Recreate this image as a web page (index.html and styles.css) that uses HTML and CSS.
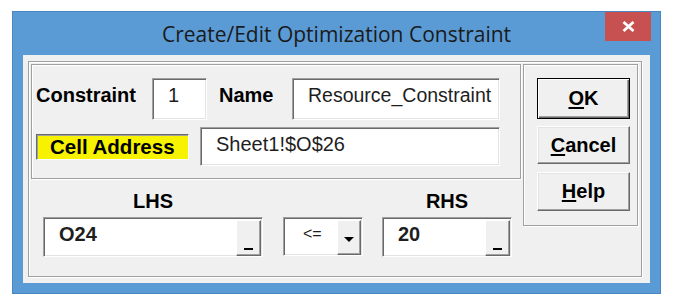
FILE: index.html
```html
<!doctype html>
<html>
    <head>
        <title>Create/Edit Optimization Constraint</title>
        <link rel="stylesheet" href="styles.css">
    </head>
    <body>
        <div class="window">
            <div class="titlebar">
                <div class="title">Create/Edit Optimization Constraint</div>
                <div class="close" title="Close">
                    <svg width="13" height="11" viewBox="0 0 13 11"><path d="M1.5 1 L11.5 10 M11.5 1 L1.5 10" stroke="#fff" stroke-width="2.8" fill="none"/></svg>
                </div>
            </div>
            <div class="client">
                <div class="frame outer">
                    <div class="main">
                        <div class="frame top">
                            <div class="row">
                                <span class="label l-constraint">Constraint</span>
                                <div class="field f-num">1</div>
                                <span class="label l-name">Name</span>
                                <div class="field f-name">Resource_Constraint</div>
                            </div>
                            <div class="row row2">
                                <div class="cell-label">Cell Address</div>
                                <div class="field f-cell">Sheet1!$O$26</div>
                            </div>
                        </div>
                        <div class="sides">
                            <div class="side lhs">
                                <div class="side-title">LHS</div>
                                <div class="field f-side"><span class="val">O24</span><span class="pick"></span></div>
                            </div>
                            <div class="side op">
                                <div class="side-title">&nbsp;</div>
                                <div class="field f-op"><span class="op-val">&lt;=</span><span class="drop"><i class="arrow"></i></span></div>
                            </div>
                            <div class="side rhs">
                                <div class="side-title">RHS</div>
                                <div class="field f-side"><span class="val">20</span><span class="pick"></span></div>
                            </div>
                        </div>
                    </div>
                    <div class="frame buttons">
                        <button type="button" class="btn btn_default"><u>O</u>K</button>
                        <button type="button" class="btn btn_cancel"><u>C</u>ancel</button>
                        <button type="button" class="btn btn_help"><u>H</u>elp</button>
                    </div>
                </div>
            </div>
        </div>
    </body>
</html>
```

FILE: styles.css
```css
* {
  box-sizing: border-box;
}

body {
  margin: 0;
  background: #fff;
  font-family: "Liberation Sans", Arial, sans-serif;
  color: #000;
}

.window {
  width: 649px;
  height: 283px;
  margin: 11px 0 0 12px;
  background-color: #5a9bd5;
  border: 1px solid #4a86c0;
  display: flex;
  flex-direction: column;
}

/* title bar */
.titlebar {
  height: 43px;
  display: grid;
  grid-template-columns: 55px 1fr 46px;
  padding-right: 9px;
  align-items: start;
}

.titlebar .title {
  grid-column: 2;
  text-align: center;
  font-family: "Open Sans", sans-serif;
  font-size: 21px;
  line-height: 45px;
  color: #1a1a1a;
  white-space: nowrap;
}

.titlebar .close {
  grid-column: 3;
  height: 29px;
  background-color: #c75050;
  display: flex;
  align-items: center;
  justify-content: center;
}

/* client area */
.client {
  flex: 1;
  margin: 0 10px 10px;
  background-color: #f0f0f0;
  padding: 6px 0 0 5px;
}

.frame {
  border: 1px solid #a0a0a0;
  box-shadow: 1px 1px 0 #fff, inset 1px 1px 0 #fff;
}

.outer {
  width: 614px;
  height: 216px;
  display: flex;
  align-items: flex-start;
  gap: 2px;
  padding: 2px 3px 0 2px;
}

.main {
  width: 490px;
}

.top {
  height: 115px;
  padding: 13px 0 0 4px;
}

.row {
  display: flex;
  align-items: flex-start;
  height: 42px;
}

.row2 {
  margin-top: 7px;
  height: 39px;
  align-items: center;
}

.label {
  font-weight: bold;
  font-size: 20px;
  line-height: 23px;
  margin-top: 6px;
}

.l-constraint {
  width: 116px;
}

.l-name {
  width: 73px;
  margin-left: 12px;
}

/* sunken edit boxes */
.field {
  background-color: #fff;
  border: 1px solid;
  border-color: #a0a0a0 #fff #fff #a0a0a0;
  box-shadow: inset 1px 1px 0 #696969, inset -1px -1px 0 #e3e3e3;
  font-size: 20px;
  line-height: 23px;
  color: #1e1e1e;
  padding-left: 15px;
  white-space: nowrap;
}

.f-num {
  width: 55px;
  height: 42px;
  padding-top: 5px;
}

.f-name {
  width: 208px;
  height: 42px;
  padding-top: 5px;
  font-size: 19.5px;
}

.f-cell {
  width: 300px;
  height: 39px;
  margin-left: 11px;
  padding-top: 5px;
}

.cell-label {
  width: 153px;
  height: 26px;
  background-color: #f7f300;
  border: 1px solid;
  border-color: #696969 #fff #fff #696969;
  box-shadow: inset 1px 1px 0 #a0a0a0;
  font-weight: bold;
  font-size: 20.5px;
  line-height: 24px;
  padding-left: 13px;
  white-space: nowrap;
}

/* LHS / operator / RHS */
.sides {
  display: flex;
  margin-top: 11px;
  padding-left: 12px;
}

.side-title {
  font-weight: bold;
  font-size: 20px;
  line-height: 23px;
  text-align: center;
  margin-bottom: 4px;
}

.lhs {
  width: 220px;
}

.op {
  width: 80px;
  margin-left: 20px;
}

.rhs {
  width: 130px;
  margin-left: 19px;
}

.f-side,
.f-op {
  height: 40px;
  display: flex;
  align-items: flex-start;
  padding-right: 1px;
}

.f-op {
  height: 39px;
  padding-left: 19px;
}

.f-side .val {
  font-weight: bold;
  padding-top: 5px;
}

.pick,
.drop {
  margin-left: auto;
  margin-top: 2px;
  width: 25px;
  height: 36px;
  background-color: #f0f0f0;
  border: 1px solid;
  border-color: #fff #696969 #696969 #fff;
  box-shadow: inset -1px -1px 0 #a0a0a0;
  display: flex;
  align-items: flex-end;
  justify-content: center;
  padding-bottom: 5px;
}

.pick::after {
  content: "";
  display: block;
  width: 9px;
  height: 2px;
  background: #000;
}

.op-val {
  font-size: 16px;
  line-height: 18px;
  padding-top: 7px;
}

.drop {
  width: 24px;
  height: 35px;
  align-items: center;
  padding-bottom: 0;
  padding-top: 3px;
}

.drop .arrow {
  display: block;
  width: 0;
  height: 0;
  border-left: 5px solid transparent;
  border-right: 5px solid transparent;
  border-top: 5px solid #000;
}

/* command buttons */
.buttons {
  width: 115px;
  height: 162px;
  padding: 13px 0 0 13px;
}

.btn {
  display: block;
  width: 93px;
  height: 38px;
  padding: 0;
  margin: 0;
  font-family: "Liberation Sans", Arial, sans-serif;
  font-weight: bold;
  font-size: 20px;
  color: #000;
  background-color: #f0f0f0;
  border: 1px solid;
  border-color: #fff #696969 #696969 #fff;
  box-shadow: inset -1px -1px 0 #a0a0a0, inset 1px 1px 0 #e3e3e3;
}

.btn u {
  text-decoration-thickness: 2px;
  text-underline-offset: 2px;
}

.btn_default {
  height: 41px;
  border: 1px solid #000;
  box-shadow: inset 1px 1px 0 #fff, inset -1px -1px 0 #696969, inset -2px -2px 0 #a0a0a0;
}

.btn_cancel {
  margin-top: 7px;
}

.btn_help {
  height: 39px;
  margin-top: 8px;
}
```
